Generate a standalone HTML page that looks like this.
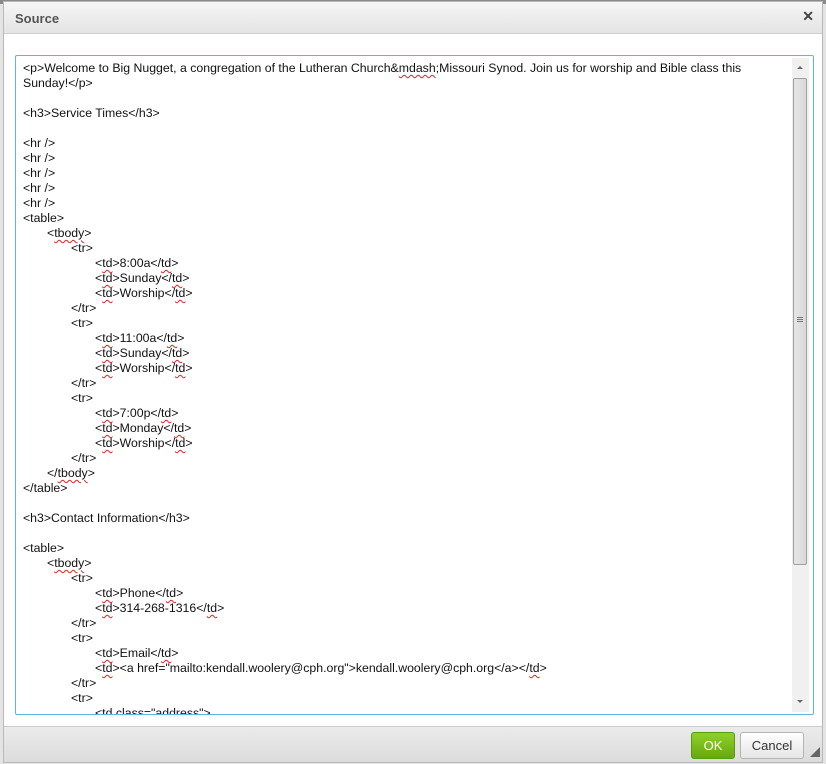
<!DOCTYPE html>
<html><head><meta charset="utf-8"><style>
*{margin:0;padding:0;box-sizing:border-box}
body{width:826px;height:764px;background:#e4e4e4;position:relative;overflow:hidden;font-family:"Liberation Sans",Arial,sans-serif}
.top{position:absolute;left:0;top:0;width:826px;height:4px;background:#8a8a8a}
.dlg{position:absolute;left:3px;top:1px;width:820px;height:762px;background:#fff;border:1px solid #b8b8b8}
.title{position:absolute;left:0;top:0;width:818px;height:32px;background:linear-gradient(#f6f6f6,#e4e4e4);border-bottom:1px solid #d0d0d0}
.title span{position:absolute;left:11px;top:9px;font-size:13px;font-weight:bold;color:#555}
.x{position:absolute;right:8px;top:6px;font-size:14px;font-weight:bold;color:#444}
.ta{position:absolute;left:11px;top:53px;width:799px;height:660px;border:1px solid #5fb6dd;border-radius:2px;background:#fff;overflow:hidden}
.lines{position:absolute;left:7px;top:5px;font-size:12.3px;line-height:15px;color:#111;white-space:pre}
.l1{padding-left:24px}.l2{padding-left:48px}.l3{padding-left:72px}
u{text-decoration:underline wavy #e02020;text-decoration-thickness:1px;text-underline-offset:2px}
.sb{position:absolute;left:776px;top:2px;width:17px;height:654px;background:#f0f0f0}
.thumb{position:absolute;left:777px;top:22px;width:14px;height:487px;background:linear-gradient(90deg,#e6e6e6,#d8d8d8);border:1px solid #a0a0a0;border-radius:2px}
.arr{position:absolute;left:781px;width:0;height:0;border-left:3px solid transparent;border-right:3px solid transparent}
.foot{position:absolute;left:0;top:724px;width:818px;height:36px;background:linear-gradient(#ebebeb,#dcdcdc);border-top:1px solid #ccc}
.ok{position:absolute;left:687px;top:5px;width:44px;height:27px;background:linear-gradient(#8fd02a,#66a90c);border:1px solid #5a9a10;border-radius:3px;color:#fff;font-size:13px;text-align:center;line-height:25px}
.cancel{position:absolute;left:736px;top:5px;width:64px;height:27px;background:linear-gradient(#fff,#e6e6e6);border:1px solid #b5b5b5;border-radius:3px;color:#333;font-size:13px;text-align:center;line-height:25px}
.grip{position:absolute;left:806px;top:20px;width:0;height:0;border-left:10px solid transparent;border-bottom:10px solid #666}
</style></head><body>
<div class="top"></div>
<div class="dlg">
<div class="title"><span>Source</span><div class="x">✕</div></div>
<div class="ta">
<div class="lines"><div>&lt;p&gt;Welcome to Big Nugget, a congregation of the Lutheran Church&amp;<u>mdash</u>;Missouri Synod. Join us for worship and Bible class this</div><div>Sunday!&lt;/p&gt;</div><div> </div><div>&lt;h3&gt;Service Times&lt;/h3&gt;</div><div> </div><div>&lt;hr /&gt;</div><div>&lt;hr /&gt;</div><div>&lt;hr /&gt;</div><div>&lt;hr /&gt;</div><div>&lt;hr /&gt;</div><div>&lt;table&gt;</div><div class="l1">&lt;<u>tbody</u>&gt;</div><div class="l2">&lt;tr&gt;</div><div class="l3">&lt;<u>td</u>&gt;8:00a&lt;/<u>td</u>&gt;</div><div class="l3">&lt;<u>td</u>&gt;Sunday&lt;/<u>td</u>&gt;</div><div class="l3">&lt;<u>td</u>&gt;Worship&lt;/<u>td</u>&gt;</div><div class="l2">&lt;/tr&gt;</div><div class="l2">&lt;tr&gt;</div><div class="l3">&lt;<u>td</u>&gt;11:00a&lt;/<u>td</u>&gt;</div><div class="l3">&lt;<u>td</u>&gt;Sunday&lt;/<u>td</u>&gt;</div><div class="l3">&lt;<u>td</u>&gt;Worship&lt;/<u>td</u>&gt;</div><div class="l2">&lt;/tr&gt;</div><div class="l2">&lt;tr&gt;</div><div class="l3">&lt;<u>td</u>&gt;7:00p&lt;/<u>td</u>&gt;</div><div class="l3">&lt;<u>td</u>&gt;Monday&lt;/<u>td</u>&gt;</div><div class="l3">&lt;<u>td</u>&gt;Worship&lt;/<u>td</u>&gt;</div><div class="l2">&lt;/tr&gt;</div><div class="l1">&lt;/<u>tbody</u>&gt;</div><div>&lt;/table&gt;</div><div> </div><div>&lt;h3&gt;Contact Information&lt;/h3&gt;</div><div> </div><div>&lt;table&gt;</div><div class="l1">&lt;<u>tbody</u>&gt;</div><div class="l2">&lt;tr&gt;</div><div class="l3">&lt;<u>td</u>&gt;Phone&lt;/<u>td</u>&gt;</div><div class="l3">&lt;<u>td</u>&gt;314-268-1316&lt;/<u>td</u>&gt;</div><div class="l2">&lt;/tr&gt;</div><div class="l2">&lt;tr&gt;</div><div class="l3">&lt;<u>td</u>&gt;Email&lt;/<u>td</u>&gt;</div><div class="l3">&lt;<u>td</u>&gt;&lt;a href="mailto:kendall.woolery@cph.org"&gt;kendall.woolery@cph.org&lt;/a&gt;&lt;/<u>td</u>&gt;</div><div class="l2">&lt;/tr&gt;</div><div class="l2">&lt;tr&gt;</div><div class="l3">&lt;td class="address"&gt;</div></div>
<div class="sb"></div>
<div class="arr" style="top:10px;border-bottom:3px solid #666"></div>
<div class="thumb"><div style="position:absolute;left:3px;top:238px;width:6px;height:1px;background:#777;box-shadow:0 2px #777,0 4px #777"></div></div>
<div class="arr" style="top:644px;border-top:3px solid #666"></div>
</div>
<div class="foot"><div class="ok">OK</div><div class="cancel">Cancel</div><div class="grip"></div></div>
</div>
</body></html>
